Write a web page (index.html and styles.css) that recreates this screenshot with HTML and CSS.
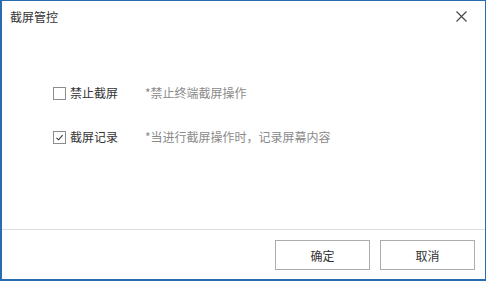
FILE: index.html
```html
<!DOCTYPE html>
<html lang="zh-CN">
<head>
    <meta charset="UTF-8">
    <title>截屏管控</title>
    <link rel="stylesheet" href="styles.css">
</head>
<body>

<div class="dialog">
    <div class="header">
        <h1>截屏管控</h1>
        <span class="close">
            <svg width="11" height="11" viewBox="0 0 11 11">
                <path d="M0.5 0.5 L10.5 10.5 M10.5 0.5 L0.5 10.5" stroke="#444" stroke-width="1.1" fill="none"/>
            </svg>
        </span>
    </div>

    <div class="main">
        <div class="row">
            <span class="check"></span>
            <span class="label">禁止截屏</span>
            <span class="desc">*禁止终端截屏操作</span>
        </div>
        <div class="row">
            <span class="check checked">
                <svg width="11" height="11" viewBox="0 0 11 11">
                    <path d="M2.5 5.8 L4.6 7.8 L8.6 3.2" stroke="#333" stroke-width="1.1" fill="none"/>
                </svg>
            </span>
            <span class="label">截屏记录</span>
            <span class="desc">*当进行截屏操作时，记录屏幕内容</span>
        </div>
    </div>

    <div class="footer">
        <button class="btn">确定</button>
        <button class="btn">取消</button>
    </div>
</div>

</body>
</html>
```

FILE: styles.css
```css
html, body, div, span, h1 {
    margin: 0;
    padding: 0;
    border: 0;
    font: inherit;
}

body {
    font-family: "Noto Sans CJK SC", "Noto Sans", sans-serif;
    font-size: 12px;
    color: #333;
    background: #fff;
}

.dialog {
    width: 486px;
    height: 281px;
    box-sizing: border-box;
    border: 1px solid #2a6cb0;
    border-left-width: 2px;
    border-bottom-width: 2px;
    display: flex;
    flex-direction: column;
    background: #fff;
}

.header {
    height: 31px;
    display: flex;
    align-items: center;
    justify-content: space-between;
    padding: 0 18px 0 8px;
}

.header h1 {
    font-size: 12px;
    line-height: 31px;
    color: #333;
}

.close {
    display: flex;
    width: 11px;
    height: 11px;
    margin-top: 0;
}

.main {
    flex: 1;
    padding: 51px 0 0 51px;
    display: flex;
    flex-direction: column;
    gap: 24px;
}

.row {
    height: 20px;
    display: flex;
    align-items: center;
}

.check {
    width: 11px;
    height: 11px;
    border: 1px solid #8c8c8c;
    background: #fff;
    display: flex;
    align-items: center;
    justify-content: center;
}

.label {
    width: 75px;
    margin-left: 4px;
    line-height: 20px;
    color: #333;
}

.desc {
    line-height: 20px;
    color: #8a8a8a;
}

.footer {
    border-top: 1px solid #dedede;
    padding: 10px 10px 9px;
    display: flex;
    justify-content: flex-end;
    gap: 10px;
}

.btn {
    width: 95px;
    height: 30px;
    border: 1px solid #acacac;
    background: #fff;
    font-family: inherit;
    font-size: 12px;
    color: #333;
    padding: 0;
}
```
